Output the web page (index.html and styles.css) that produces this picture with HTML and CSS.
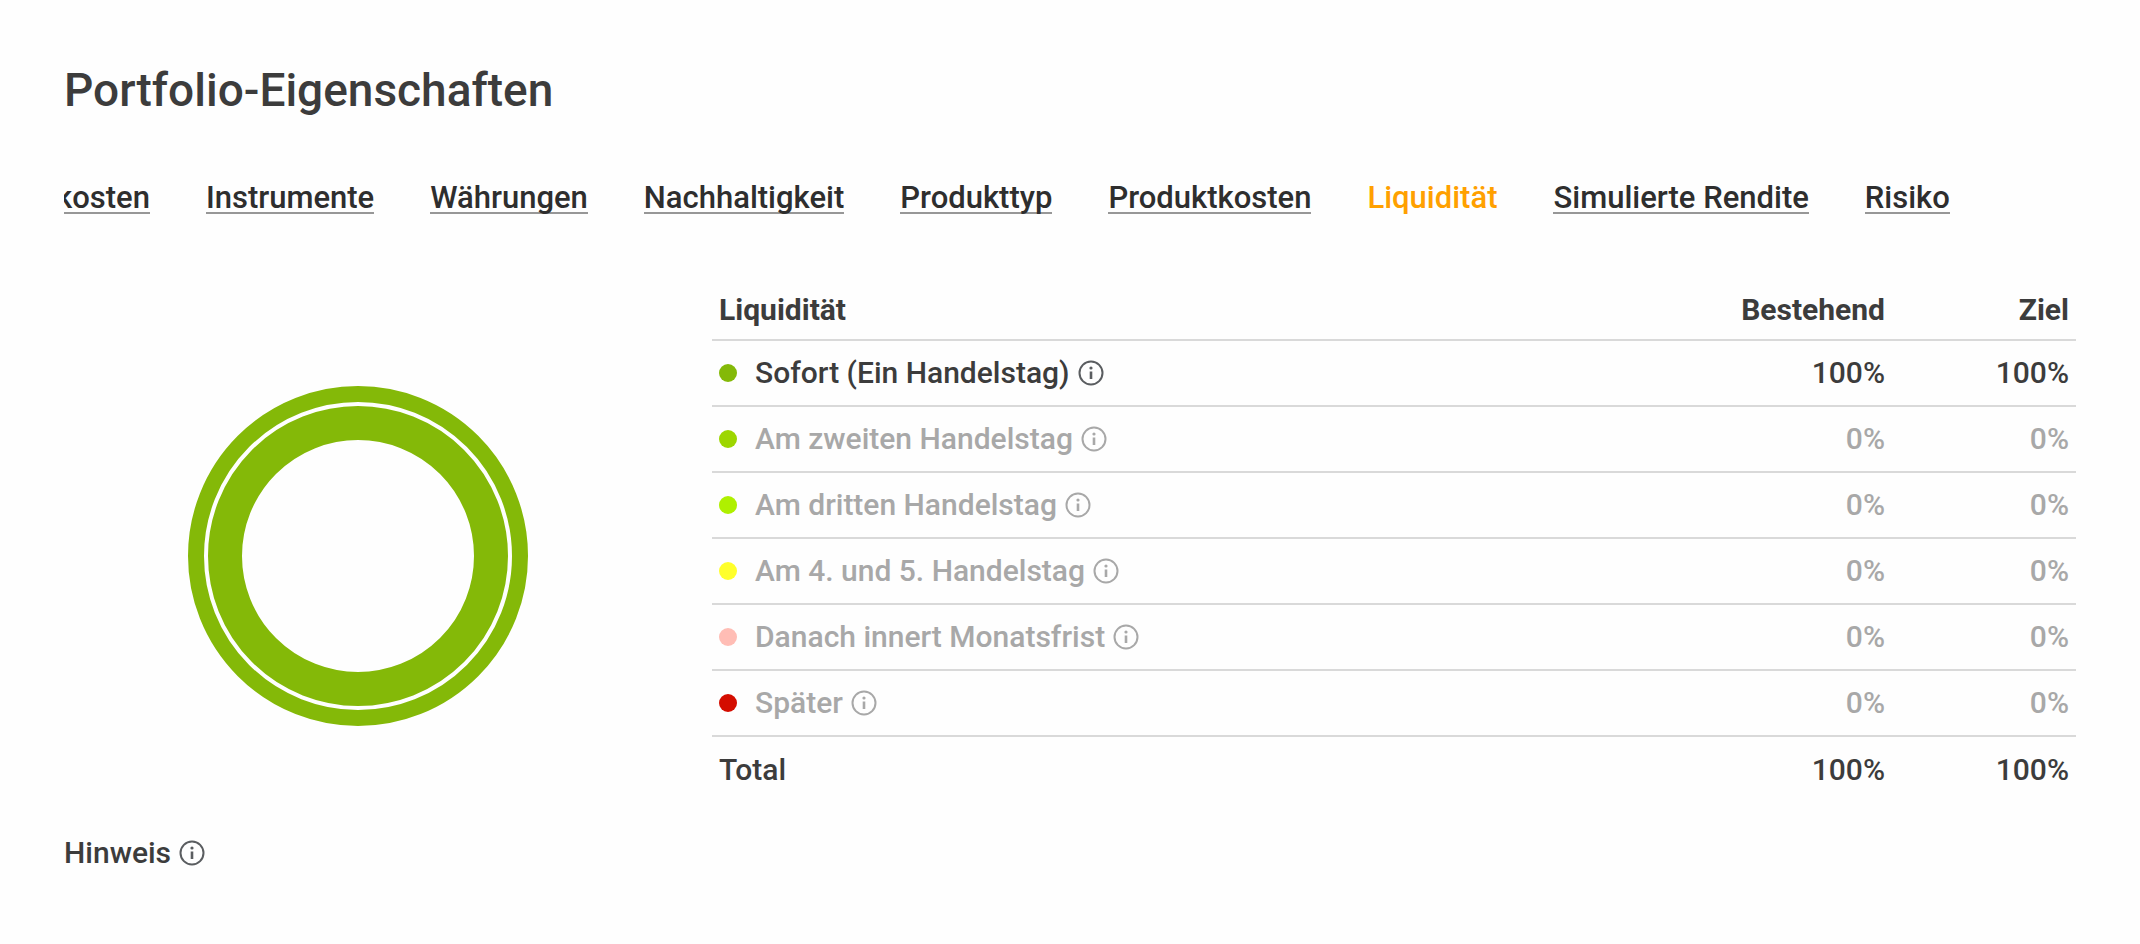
FILE: index.html
```html
<!DOCTYPE html>
<html lang="de">
<head>
<meta charset="utf-8">
<title>Portfolio-Eigenschaften</title>
<link rel="stylesheet" href="styles.css">
</head>
<body>
<svg class="sprite" aria-hidden="true">
  <symbol id="info" viewBox="0 0 26 26">
    <circle cx="13" cy="13" r="11.5" fill="none" stroke="currentColor" stroke-width="2"/>
    <circle cx="13" cy="8" r="1.6" fill="currentColor"/>
    <path d="M13 11.5V19" fill="none" stroke="currentColor" stroke-width="2.6"/>
  </symbol>
</svg>
<main class="page">
  <h1 class="title">Portfolio-Eigenschaften</h1>
  <nav class="tabs" aria-label="Eigenschaften">
    <a class="tab tab-cut" href="#kosten">kosten</a>
    <a class="tab" href="#instrumente">Instrumente</a>
    <a class="tab" href="#waehrungen">Währungen</a>
    <a class="tab" href="#nachhaltigkeit">Nachhaltigkeit</a>
    <a class="tab" href="#produkttyp">Produkttyp</a>
    <a class="tab" href="#produktkosten">Produktkosten</a>
    <a class="tab tab-active" href="#liquiditaet" aria-current="page">Liquidität</a>
    <a class="tab" href="#rendite">Simulierte Rendite</a>
    <a class="tab" href="#risiko">Risiko</a>
  </nav>
  <section class="content">
    <div class="chart">
      <svg class="donut" viewBox="0 0 340 340" role="img" aria-label="Liquidität">
        <circle cx="170" cy="170" r="162" fill="none" stroke="#84b908" stroke-width="16"/>
        <circle cx="170" cy="170" r="133" fill="none" stroke="#84b908" stroke-width="34"/>
      </svg>
    </div>
    <table class="table">
      <thead>
        <tr><th scope="col">Liquidität</th><th class="num" scope="col">Bestehend</th><th class="num" scope="col">Ziel</th></tr>
      </thead>
      <tbody>
        <tr><td><div class="label"><span class="dot dot-1"></span>Sofort (Ein Handelstag)<button class="info" type="button" aria-label="Info"><svg class="icon"><use href="#info"/></svg></button></div></td><td class="num">100%</td><td class="num">100%</td></tr>
        <tr class="muted"><td><div class="label"><span class="dot dot-2"></span>Am zweiten Handelstag<button class="info" type="button" aria-label="Info"><svg class="icon"><use href="#info"/></svg></button></div></td><td class="num">0%</td><td class="num">0%</td></tr>
        <tr class="muted"><td><div class="label"><span class="dot dot-3"></span>Am dritten Handelstag<button class="info" type="button" aria-label="Info"><svg class="icon"><use href="#info"/></svg></button></div></td><td class="num">0%</td><td class="num">0%</td></tr>
        <tr class="muted"><td><div class="label"><span class="dot dot-4"></span>Am 4. und 5. Handelstag<button class="info" type="button" aria-label="Info"><svg class="icon"><use href="#info"/></svg></button></div></td><td class="num">0%</td><td class="num">0%</td></tr>
        <tr class="muted"><td><div class="label"><span class="dot dot-5"></span>Danach innert Monatsfrist<button class="info" type="button" aria-label="Info"><svg class="icon"><use href="#info"/></svg></button></div></td><td class="num">0%</td><td class="num">0%</td></tr>
        <tr class="muted"><td><div class="label"><span class="dot dot-6"></span>Später<button class="info" type="button" aria-label="Info"><svg class="icon"><use href="#info"/></svg></button></div></td><td class="num">0%</td><td class="num">0%</td></tr>
      </tbody>
      <tfoot>
        <tr><td>Total</td><td class="num">100%</td><td class="num">100%</td></tr>
      </tfoot>
    </table>
  </section>
  <div class="note">Hinweis<button class="info" type="button" aria-label="Info"><svg class="icon"><use href="#info"/></svg></button></div>
</main>
</body>
</html>
```
FILE: styles.css
```css
body {
  margin: 0;
  background: #fefefe;
  color: #3c3c3c;
  font-family: Roboto, "Liberation Sans", sans-serif;
  font-size: 30px;
  font-weight: 500;
  line-height: 36px;
}
.sprite { position: absolute; width: 0; height: 0; }
.page { padding: 60px 64px; }
.title {
  margin: 0;
  font-size: 46px;
  font-weight: 500;
  line-height: 60px;
}
.tabs {
  display: flex;
  gap: 56px;
  margin-top: 60px;
  padding-bottom: 8px;
  overflow: hidden;
  font-size: 31px;
  white-space: nowrap;
}
.tab {
  height: 32px;
  line-height: 36px;
  color: #2e2e2e;
  text-decoration: none;
  border-bottom: 2px solid #979797;
}
.tab-cut { margin-left: -8px; }
.tab-active { color: #ffa000; border-color: transparent; }
.content {
  display: grid;
  grid-template-columns: 588fr 1364fr;
  gap: 60px;
  align-items: center;
  margin-top: 52px;
}
.chart { display: flex; justify-content: center; padding-top: 34px; }
.donut { width: 340px; height: 340px; }
.table { width: 100%; border-collapse: separate; border-spacing: 0; }
.table th, .table td {
  box-sizing: border-box;
  height: 66px;
  padding: 0 7px;
  text-align: left;
  border-bottom: 2px solid #d9d9d9;
}
.table th { height: 67px; padding-top: 7px; font-weight: 700; }
.table tfoot td { border-bottom: 0; }
.table .num { width: 184px; text-align: right; }
.muted { color: #a8a8a8; }
.label { display: flex; align-items: center; }
.dot { width: 18px; height: 18px; margin-right: 18px; border-radius: 50%; }
.dot-1 { background: #84b908; }
.dot-2 { background: #9dd600; }
.dot-3 { background: #aff000; }
.dot-4 { background: #ffff2b; }
.dot-5 { background: #ffbdb5; }
.dot-6 { background: #d40d00; }
.info {
  display: flex;
  margin: 0 0 0 8px;
  padding: 0;
  border: 0;
  background: none;
  color: #5a5d60;
}
.muted .info { color: inherit; }
.icon { width: 26px; height: 26px; }
.note { display: flex; align-items: center; margin-top: 32px; }
```
